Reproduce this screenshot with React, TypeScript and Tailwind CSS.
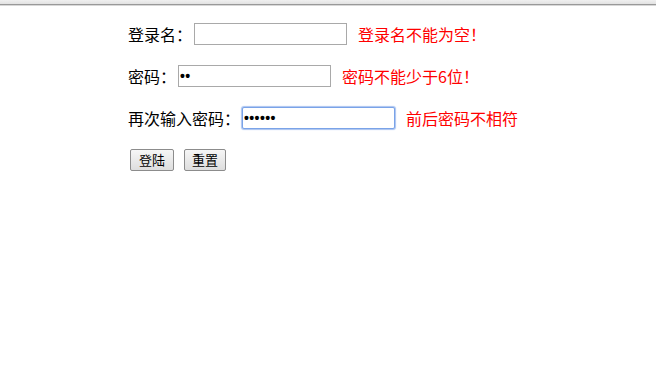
import React from 'react';

const font = { fontFamily: '"Noto Sans CJK SC", "DejaVu Sans", sans-serif' };

interface RowProps {
  label: string;
  value: string;
  error: string;
  focused?: boolean;
}

const Row: React.FC<RowProps> = ({ label, value, error, focused }) => (
  <div className="flex items-center h-[22px] mb-[20px]">
    <span className="text-[16px] text-black leading-none whitespace-nowrap">{label}</span>
    <input
      type="text"
      defaultValue={value}
      readOnly
      className={
        'ml-[2px] w-[153px] h-[22px] px-[1px] text-[14px] font-bold tracking-[0.4px] text-black bg-white outline-none font-["Liberation_Sans",Arial,sans-serif] ' +
        (focused
          ? 'border border-[#7aa3e8] shadow-[0_0_1px_1px_#a9c3f0] rounded-[2px]'
          : 'border border-[#a9a9a9]')
      }
    />
    <span className="ml-[11px] text-[16px] text-[#ff0000] leading-none whitespace-nowrap">{error}</span>
  </div>
);

export default function App() {
  return (
    <div className="w-[656px] h-[379px] bg-white overflow-hidden" style={font}>
      <div className="h-[4px] bg-gradient-to-b from-[#f0f0f0] to-[#e2e2e2]" />
      <div className="h-[1px] bg-[#999999]" />
      <div className="h-[1px] bg-[#d8d8d8]" />
      <div className="pl-[128px] pt-[17px]">
        <Row label="登录名：" value="" error="登录名不能为空！" />
        <Row label="密码：" value="••" error="密码不能少于6位！" />
        <Row label="再次输入密码：" value="••••••" error="前后密码不相符" focused />
        <div className="flex gap-[10px] pl-[2px]">
          <button className="w-[44px] h-[22px] text-[13px] text-black border border-[#8c8c8c] rounded-[2px] bg-gradient-to-b from-[#f6f6f6] to-[#dedede]">
            登陆
          </button>
          <button className="w-[42px] h-[22px] text-[13px] text-black border border-[#8c8c8c] rounded-[2px] bg-gradient-to-b from-[#f6f6f6] to-[#dedede]">
            重置
          </button>
        </div>
      </div>
    </div>
  );
}
